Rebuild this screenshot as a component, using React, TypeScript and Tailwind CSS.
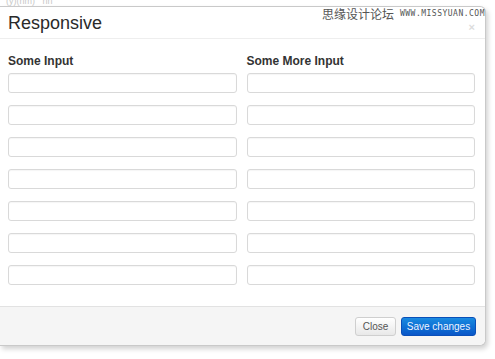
const rows = [0, 1, 2, 3, 4, 5, 6];

function Field() {
  return <div className="h-[20px] rounded-[3px] border border-[#d9d9d9] bg-white shadow-[inset_0_1px_1px_rgba(0,0,0,0.04)]" />;
}

export default function App() {
  return (
    <div className="relative w-[495px] h-[359px] overflow-hidden bg-white font-['Liberation_Sans',Arial,sans-serif] text-[#333]">
      {/* page text peeking above the modal */}
      <div className="h-[6px] overflow-hidden pl-[6px]">
        <div className="-mt-[4px] text-[9px] leading-[10px] text-[#c8c8c8]">(y)(nm) &nbsp; nn</div>
      </div>

      <div className="w-[486px] rounded-r-[6px] border-y border-r border-[#c9c9c9] bg-white shadow-[2px_3px_5px_rgba(0,0,0,0.18)]">
        <div className="flex h-[32px] items-center justify-between border-b border-[#eeeeee] pl-[8px] pr-[10px]">
          <h3 className="text-[18px] leading-none text-[#2a2a2a]">Responsive</h3>
          <span className="mt-[10px] text-[11px] font-bold leading-none text-[#dcdcdc]">×</span>
        </div>

        <div className="grid grid-cols-2 gap-x-[10px] pl-[8px] pr-[10px] pt-[15px] pb-[21px]">
          {[
            "Some Input",
            "Some More Input",
          ].map((label) => (
            <div key={label} className="flex flex-col">
              <label className="mb-[5px] text-[12px] font-bold leading-[14px] text-[#333]">{label}</label>
              <div className="flex flex-col gap-[12px]">
                {rows.map((r) => (
                  <Field key={r} />
                ))}
              </div>
            </div>
          ))}
        </div>

        <div className="flex h-[39px] items-center justify-end gap-[5px] rounded-br-[6px] border-t border-[#e2e2e2] bg-[#f5f5f5] pr-[9px] pt-[1px]">
          <button className="h-[19px] w-[41px] rounded-[3px] border border-[#cfcfcf] bg-gradient-to-b from-white to-[#e8e8e8] text-[10px] text-[#555]">
            Close
          </button>
          <button className="h-[19px] w-[75px] rounded-[3px] border border-[#0a4fb8] bg-gradient-to-b from-[#1a8ae0] to-[#0a56c8] text-[10px] text-[#eef4ff]">
            Save changes
          </button>
        </div>
      </div>

      {/* watermark */}
      <div className="absolute right-[10px] top-[8px] flex items-center gap-[6px] text-[#555]">
        <span className="text-[12px] leading-none font-['Noto_Sans_CJK_SC',sans-serif]">思缘设计论坛</span>
        <span className="text-[8px] leading-none tracking-[0.5px] font-['DejaVu_Sans_Mono',monospace]">WWW.MISSYUAN.COM</span>
      </div>
    </div>
  );
}
